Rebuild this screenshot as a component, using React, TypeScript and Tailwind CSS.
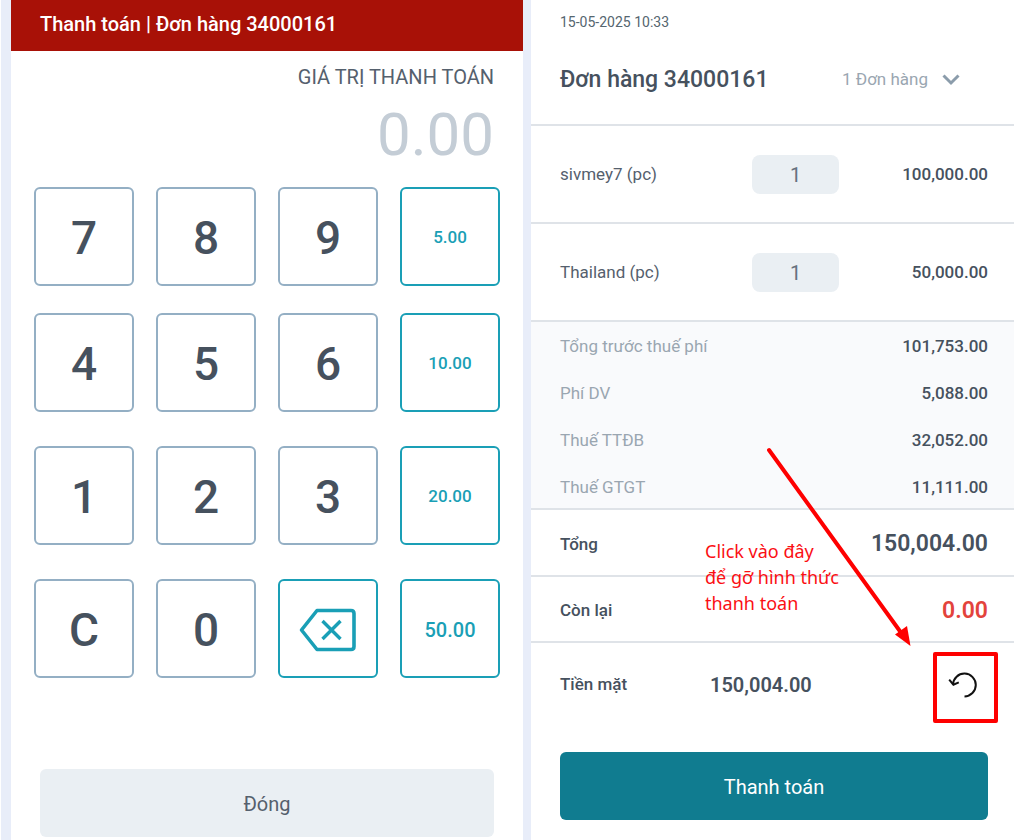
import React from "react";

const digitRows: { digits: string[]; amount: string }[] = [
  { digits: ["7", "8", "9"], amount: "5.00" },
  { digits: ["4", "5", "6"], amount: "10.00" },
  { digits: ["1", "2", "3"], amount: "20.00" },
];

const items = [
  { name: "sivmey7 (pc)", qty: 1, price: "100,000.00" },
  { name: "Thailand (pc)", qty: 1, price: "50,000.00" },
];

const fees = [
  { label: "Tổng trước thuế phí", value: "101,753.00" },
  { label: "Phí DV", value: "5,088.00" },
  { label: "Thuế TTĐB", value: "32,052.00" },
  { label: "Thuế GTGT", value: "11,111.00" },
];

function DigitKey({ children }: { children: React.ReactNode }) {
  return (
    <button
      type="button"
      className="flex h-[99px] items-center justify-center rounded-md border-2 border-[#94afc4] pt-1 text-[46px] font-medium text-[#46515e]"
    >
      {children}
    </button>
  );
}

function TealKey({ children, label, large }: { children: React.ReactNode; label?: string; large?: boolean }) {
  return (
    <button
      type="button"
      aria-label={label}
      className={
        "flex h-[99px] items-center justify-center rounded-md border-2 border-[#1a9fb6] pt-0.5 font-medium text-[#1a9fb6] " +
        (large ? "text-xl" : "text-[17px]")
      }
    >
      {children}
    </button>
  );
}

function BackspaceIcon() {
  return (
    <svg viewBox="0 0 58 44" className="h-11 w-[58px]" fill="none" stroke="currentColor" strokeLinejoin="round">
      <path d="M18 2.5H52Q55 2.5 55 5.5V38.5Q55 41.5 52 41.5H18L2.5 22Z" strokeWidth="3.6" />
      <path d="M23.500 13L41.500 31M41.500 13L23.500 31" strokeWidth="3.400" />
    </svg>
  );
}

function UndoIcon() {
  return (
    <svg viewBox="0 0 30 28" className="h-7 w-[30px]" fill="none" stroke="#111" strokeWidth="2">
      <path d="M5 13.5A11.4 11.4 0 1 1 16.5 25.4" />
      <path d="M1.2 8.6L5.4 13.7L10.8 11.3" />
    </svg>
  );
}

function Keypad() {
  return (
    <section className="flex min-w-0 flex-[512] flex-col bg-white">
      <header className="flex h-[51px] items-center bg-[#a81107] px-[29px] pb-1">
        <h1 className="text-xl font-medium text-white">Thanh toán | Đơn hàng 34000161</h1>
      </header>
      <div className="flex flex-col items-end px-[29px] pt-3">
        <h2 className="text-xl leading-7 text-[#55606d]">GIÁ TRỊ THANH TOÁN</h2>
        <output className="pt-3 text-[60px] leading-[64px] text-[#c4cdd6]">0.00</output>
      </div>
      <div className="flex flex-col gap-[34px] px-[23px] pt-5">
        {digitRows.map((row, i) => (
          <div key={row.amount} className={"grid grid-cols-4 gap-[22px] " + (i === 0 ? "-mb-[7px]" : "")}>
            {row.digits.map((d) => (
              <DigitKey key={d}>{d}</DigitKey>
            ))}
            <TealKey>{row.amount}</TealKey>
          </div>
        ))}
        <div className="grid grid-cols-4 gap-[22px]">
          <DigitKey>C</DigitKey>
          <DigitKey>0</DigitKey>
          <TealKey label="Xóa">
            <BackspaceIcon />
          </TealKey>
          <TealKey large>50.00</TealKey>
        </div>
      </div>
      <div className="mt-auto px-[29px] pt-8 pb-[3px]">
        <button type="button" className="h-[68px] w-full rounded-md bg-[#eaeff3] pt-0.5 text-xl text-[#55606d]">
          Đóng
        </button>
      </div>
    </section>
  );
}

function Callout() {
  return (
    <>
      <p className="absolute right-[173px] bottom-[107px] w-[136px] font-['Noto_Sans',sans-serif] text-lg leading-[26px] whitespace-nowrap text-[#fb0f14]">
        Click vào đây
        <br />
        để gỡ hình thức
        <br />
        thanh toán
      </p>
      <svg viewBox="0 0 150 204" className="pointer-events-none absolute right-[100px] bottom-[77px] h-[204px] w-[150px]">
        <path d="M5 8L138 192" stroke="#fe0000" strokeWidth="4" strokeLinecap="round" />
        <path d="M146.500 204L131 192.500L143 184Z" fill="#fe0000" />
      </svg>
      <span className="pointer-events-none absolute right-4 bottom-0 h-[71px] w-[65px] rounded-xs border-4 border-[#fe0000]" />
    </>
  );
}

function OrderPanel() {
  return (
    <section className="flex min-w-0 flex-[483] flex-col bg-white text-[#46515e]">
      <header className="border-b-2 border-[#dfe3e8] pr-[26px] pl-[29px] pt-3 pb-7">
        <time className="block text-sm leading-5 text-[#55666f]">15-05-2025 10:33</time>
        <div className="flex items-center justify-between pt-8 pr-7">
          <h2 className="text-[23px] leading-8 font-medium">Đơn hàng 34000161</h2>
          <button type="button" className="flex items-center gap-3.5 text-[17px] text-[#9aa6b1]">
            1 Đơn hàng
            <svg viewBox="0 0 18 12" className="h-3 w-[18px]" fill="none" stroke="#8b9cab" strokeWidth="3">
              <path d="M1.500 1.500L9 9L16.500 1.500" />
            </svg>
          </button>
        </div>
      </header>

      <table className="w-full table-fixed border-separate border-spacing-0 text-[17px]">
        <tbody>
          {items.map((item) => (
            <tr key={item.name} className="h-[98px]">
              <th scope="row" className="border-b-2 border-[#dfe3e8] pt-0.5 pl-[29px] text-left font-normal text-[#55606d]">
                {item.name}
              </th>
              <td className="w-[87px] border-b-2 border-[#dfe3e8]">
                <input
                  type="text"
                  inputMode="numeric"
                  aria-label={item.name}
                  defaultValue={item.qty}
                  className="block h-[39px] w-full rounded-lg bg-[#eaeff3] pt-0.5 text-center text-xl text-[#66717d]"
                />
              </td>
              <td className="w-[175px] border-b-2 border-[#dfe3e8] pt-0.5 pr-[26px] text-right font-medium">{item.price}</td>
            </tr>
          ))}
        </tbody>
      </table>

      <div className="relative">
        <dl>
          <div className="flex flex-col gap-[23px] border-b-2 border-[#dfe3e8] bg-[#f9fafc] pt-3 pr-[26px] pb-[9px] pl-[29px] text-[17px] leading-6">
            {fees.map((fee) => (
              <div key={fee.label} className="flex justify-between">
                <dt className="text-[#9aa6b1]">{fee.label}</dt>
                <dd className="font-medium">{fee.value}</dd>
              </div>
            ))}
          </div>
          <div className="flex h-[67px] items-center justify-between border-b-2 border-[#dfe3e8] pt-1 pr-[26px] pl-[29px]">
            <dt className="text-[17px] font-medium">Tổng</dt>
            <dd className="text-[23px] font-semibold">150,004.00</dd>
          </div>
          <div className="flex h-[66px] items-center justify-between border-b-2 border-[#dfe3e8] pt-1 pr-[26px] pl-[29px]">
            <dt className="text-[17px] font-medium">Còn lại</dt>
            <dd className="text-[23px] font-semibold text-[#e3433c]">0.00</dd>
          </div>
        </dl>
        <div className="flex h-20 items-center pt-1 pr-9 pl-[29px]">
          <span className="w-[150px] text-[17px] font-medium">Tiền mặt</span>
          <span className="text-xl font-semibold">150,004.00</span>
          <button type="button" aria-label="Hoàn tác" className="ml-auto">
            <UndoIcon />
          </button>
        </div>
        <Callout />
      </div>

      <div className="mt-auto pr-[26px] pb-5 pl-[29px]">
        <button type="button" className="h-[68px] w-full rounded-md bg-[#107c90] pt-0.5 text-xl text-white">
          Thanh toán
        </button>
      </div>
    </section>
  );
}

export default function App() {
  return (
    <main className="flex min-h-screen gap-2 border-l border-white bg-[#e8edf9] pl-2.5 font-[Roboto,'Noto_Sans',sans-serif]">
      <Keypad />
      <OrderPanel />
    </main>
  );
}
